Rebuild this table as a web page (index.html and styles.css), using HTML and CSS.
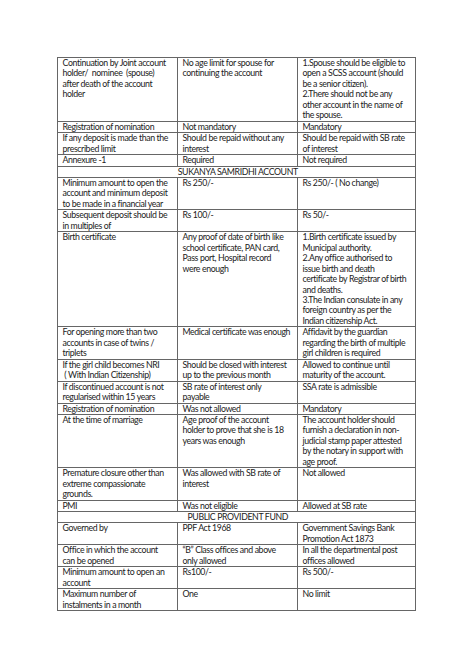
FILE: index.html
```html
<!DOCTYPE html>
<html>
<head>
<meta charset="utf-8">
<link rel="stylesheet" href="styles.css">
</head>
<body>
<div class="page">
<table class="doc">
<colgroup><col class="c1"><col class="c2"><col class="c3"></colgroup>
<tr><td>Continuation by Joint account<br>holder/&nbsp; nominee&nbsp; (spouse)<br>after death of the account<br>holder</td><td>No age limit for spouse for<br>continuing the account</td><td>1.Spouse should be eligible to<br>open a SCSS account (should<br>be a senior citizen).<br>2.There should not be any<br>other account in the name of<br>the spouse.</td></tr>
<tr><td>Registration of nomination</td><td>Not mandatory</td><td>Mandatory</td></tr>
<tr><td>If any deposit is made than the<br>prescribed limit</td><td>Should be repaid without any<br>interest</td><td>Should be repaid with SB rate<br>of interest</td></tr>
<tr><td>Annexure -1</td><td>Required</td><td>Not required</td></tr>
<tr><td colspan="3" class="head">SUKANYA SAMRIDHI ACCOUNT</td></tr>
<tr><td>Minimum amount to open the<br>account and minimum deposit<br>to be made in a financial year</td><td>Rs 250/-</td><td>Rs 250/- ( No change)</td></tr>
<tr><td>Subsequent deposit should be<br>in multiples of</td><td>Rs 100/-</td><td>Rs 50/-</td></tr>
<tr><td>Birth certificate</td><td>Any proof of date of birth like<br>school certificate, PAN card,<br>Pass port, Hospital record<br>were enough</td><td>1.Birth certificate issued by<br>Municipal authority.<br>2.Any office authorised to<br>issue birth and death<br>certificate by Registrar of birth<br>and deaths.<br>3.The Indian consulate in any<br>foreign country as per the<br>Indian citizenship Act.</td></tr>
<tr><td>For opening more than two<br>accounts in case of twins /<br>triplets</td><td>Medical certificate was enough</td><td>Affidavit by the guardian<br>regarding the birth of multiple<br>girl children is required</td></tr>
<tr><td>If the girl child becomes NRI<br>&nbsp;( With Indian Citizenship)</td><td>Should be closed with interest<br>up to the previous month</td><td>Allowed to continue until<br>maturity of the account.</td></tr>
<tr><td>If discontinued account is not<br>regularised within 15 years</td><td>SB rate of interest only<br>payable</td><td>SSA rate is admissible</td></tr>
<tr><td>Registration of nomination</td><td>Was not allowed</td><td>Mandatory</td></tr>
<tr><td>At the time of marriage</td><td>Age proof of the account<br>holder to prove that she is 18<br>years was enough</td><td>The account holder should<br>furnish a declaration in non-<br>judicial stamp paper attested<br>by the notary in support with<br>age proof.</td></tr>
<tr><td>Premature closure other than<br>extreme compassionate<br>grounds.</td><td>Was allowed with SB rate of<br>interest</td><td>Not allowed</td></tr>
<tr><td>PMI</td><td>Was not eligible</td><td>Allowed at SB rate</td></tr>
<tr><td colspan="3" class="head">PUBLIC PROVIDENT FUND</td></tr>
<tr><td>Governed by</td><td>PPF Act 1968</td><td>Government Savings Bank<br>Promotion Act 1873</td></tr>
<tr><td>Office in which the account<br>can be opened</td><td>“B” Class offices and above<br>only allowed</td><td>In all the departmental post<br>offices allowed</td></tr>
<tr><td>Minimum amount to open an<br>account</td><td>Rs100/-</td><td>Rs 500/-</td></tr>
<tr><td>Maximum number of<br>instalments in a month</td><td>One</td><td>No limit</td></tr>
</table>
</div>
</body>
</html>
```
FILE: styles.css
```css
html, body {
  margin: 0;
  padding: 0;
  background: #fff;
}
.page {
  padding: 57px 0 0 57px;
}
.doc {
  border-collapse: collapse;
  table-layout: fixed;
  width: 358px;
  font-family: Lato, "Liberation Sans", sans-serif;
  font-size: 8.75px;
  line-height: 10.45px;
  letter-spacing: -0.38px;
  color: #222;
}
.c1 { width: 120px; }
.c2 { width: 120px; }
.c3 { width: 118px; }
.doc td {
  border: 1px solid #666;
  padding: 0 2px 0 4.5px;
  vertical-align: top;
  white-space: nowrap;
  overflow: hidden;
}
.doc td.head {
  text-align: center;
}
```
